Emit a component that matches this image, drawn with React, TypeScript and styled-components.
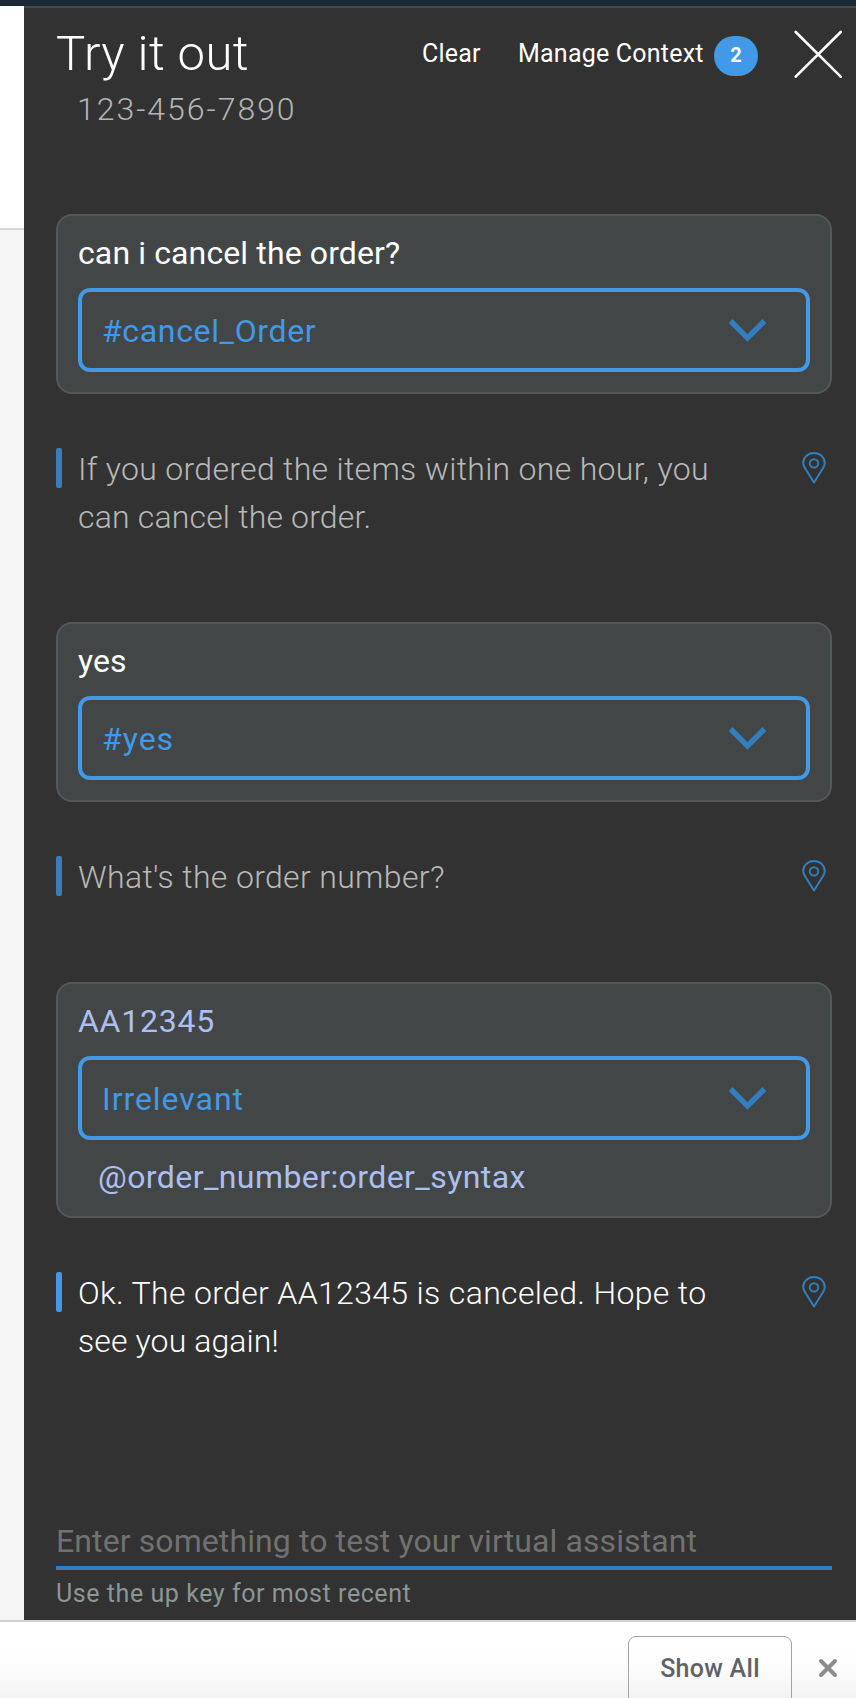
import React from 'react';
import styled, { createGlobalStyle } from 'styled-components';

const GlobalStyle = createGlobalStyle`
  * { box-sizing: border-box; }
  body { margin: 0; background: #fff; font-family: Roboto, "Liberation Sans", sans-serif; font-weight: 400; }
  button { border: 0; padding: 0; background: none; font: inherit; color: inherit; text-align: left; }
`;

const Page = styled.div`
  width: 856px;
  height: 1698px;
  display: flex;
  flex-direction: column;
  overflow: hidden;
`;

const TopBar = styled.div`
  height: 6px;
  flex: none;
  background: #1a2a34;
`;

const Workspace = styled.div`
  flex: none;
  height: 1614px;
  display: flex;
`;

const PageEdge = styled.div`
  width: 24px;
  flex: none;
  display: flex;
  flex-direction: column;
`;

const EdgeHeader = styled.div`
  height: 224px;
  background: #fff;
  border-bottom: 2px solid #d8d8d8;
`;

const EdgeBody = styled.div`
  flex: 1;
  background: #f5f5f5;
`;

const Panel = styled.aside`
  flex: 1;
  display: flex;
  flex-direction: column;
  padding: 0 24px 0 32px;
  background: #323232;
  border-top: 2px solid #464a4a;
`;

const Header = styled.header`
  display: flex;
  padding-top: 17px;
  height: 77px;
  margin-right: -24px;
`;

const Title = styled.h1`
  margin: 0;
  width: 366px;
  font-size: 49px;
  line-height: 57px;
  font-weight: 300;
  letter-spacing: 0.45px;
  color: #fff;
`;

const HeaderAction = styled.button<{ $width: number }>`
  width: ${(p) => p.$width}px;
  flex: none;
  height: 30px;
  margin-top: 14px;
  line-height: 30px;
  font-size: 25px;
  letter-spacing: 0.22px;
  color: #fff;
  white-space: nowrap;
`;

const CountBadge = styled.span`
  width: 44px;
  height: 40px;
  flex: none;
  margin-top: 11px;
  border-radius: 20px;
  background: #4199e8;
  color: #fff;
  font-size: 20px;
  font-weight: 700;
  line-height: 38px;
  text-align: center;
`;

const CloseButton = styled.button`
  width: 48px;
  height: 48px;
  margin: 5px 0 0 36px;
  svg { display: block; }
`;

const Phone = styled.div`
  padding-left: 21px;
  font-size: 32px;
  line-height: 48px;
  font-weight: 300;
  letter-spacing: 1.98px;
  color: #b4b4b4;
`;

const Chat = styled.main`
  flex: 1;
  padding-top: 81px;
`;

const Card = styled.section`
  padding: 13px 20px 20px;
  border: 2px solid #535858;
  border-radius: 16px;
  background: #434647;
`;

const Utterance = styled.div<{ $entity?: boolean; $spacing: number }>`
  font-size: 32px;
  line-height: 48px;
  letter-spacing: ${(p) => p.$spacing}px;
  color: ${(p) => (p.$entity ? '#adbfee' : '#fff')};
`;

const IntentSelect = styled.button<{ $spacing: number }>`
  width: 100%;
  height: 84px;
  margin-top: 11px;
  padding: 2px 38px 0 20px;
  display: flex;
  align-items: center;
  justify-content: space-between;
  border: 4px solid #4199e8;
  border-radius: 12px;
  font-size: 32px;
  line-height: 48px;
  letter-spacing: ${(p) => p.$spacing}px;
  color: #4199e8;
  svg { display: block; margin-top: -3px; }
`;

const Entity = styled.div`
  margin-top: 18px;
  padding-left: 20px;
  font-size: 32px;
  line-height: 38px;
  letter-spacing: 0.42px;
  color: #adbfee;
`;

const Reply = styled.div`
  display: flex;
  margin: 51px 0 81px;
`;

const ReplyMark = styled.span<{ $current?: boolean }>`
  width: 6px;
  height: 40px;
  flex: none;
  margin-top: 3px;
  border-radius: 2px;
  background: ${(p) => (p.$current ? '#4199e8' : '#3f7cb6')};
`;

const ReplyText = styled.p<{ $current?: boolean }>`
  flex: 1;
  margin: 0;
  padding-left: 16px;
  font-size: 32px;
  line-height: 48px;
  font-weight: 300;
  white-space: nowrap;
  color: ${(p) => (p.$current ? '#fff' : '#b8b8b8')};
`;

const Line = styled.span<{ $spacing: number }>`
  display: block;
  letter-spacing: ${(p) => p.$spacing}px;
`;

const PinButton = styled.button`
  width: 24px;
  height: 34px;
  margin: 6px 6px 0 0;
  svg { display: block; }
`;

const Composer = styled.footer`
  height: 103px;
`;

const ComposerInput = styled.input`
  display: block;
  width: 100%;
  height: 53px;
  padding: 0 0 1px;
  border: 0;
  border-bottom: 4px solid #327ebe;
  border-radius: 0;
  outline: 0;
  background: transparent;
  font: 400 32px/48px Roboto, sans-serif;
  letter-spacing: 0.1px;
  &::placeholder { color: #717171; opacity: 1; }
`;

const Hint = styled.div`
  padding: 9px 0 0;
  font-size: 25px;
  line-height: 30px;
  letter-spacing: 0.56px;
  color: #8c9696;
`;

const DownloadBar = styled.div`
  flex: 1;
  display: flex;
  justify-content: flex-end;
  padding: 14px 18px 0 0;
  border-top: 2px solid #d0d0d0;
  background: linear-gradient(#fff 0%, #fefefe 45%, #f1f1f1 100%);
`;

const ShowAll = styled.button`
  width: 164px;
  height: 70px;
  flex: none;
  padding-bottom: 4px;
  border: 1px solid #a3a3a3;
  border-radius: 8px;
  font-size: 25px;
  line-height: 32px;
  font-weight: 500;
  letter-spacing: 0.3px;
  text-align: center;
  color: #5f6368;
`;

const Dismiss = styled.button`
  width: 20px;
  height: 20px;
  margin: 22px 0 0 26px;
  svg { display: block; }
`;

const Chevron = () => (
  <svg width="40" height="24" viewBox="0 0 40 24" fill="none" stroke="#327ebe" strokeWidth="5.4">
    <path d="M2.6 3 19.5 20 36.4 3" />
  </svg>
);

const Pin = () => (
  <svg width="24" height="34" viewBox="0 0 24 34" fill="none" stroke="#327ebe" strokeWidth="2">
    <path strokeLinejoin="round" d="M12 31.5 3.2 17.5C1.8 15.3 1.2 13.8 1.2 12a10.8 10.1 0 0 1 21.6 0c0 1.8-.6 3.3-2 5.5Z" />
    <circle cx="12" cy="12.4" r="4.2" />
  </svg>
);

interface Turn {
  text: string;
  spacing: number;
  intent: string;
  intentSpacing: number;
  entity?: string;
  reply: [string, number][];
  current?: boolean;
}

const turns: Turn[] = [
  {
    text: 'can i cancel the order?', spacing: 0.12,
    intent: '#cancel_Order', intentSpacing: 0.65,
    reply: [
      ['If you ordered the items within one hour, you', 0.3],
      ['can cancel the order.', 0.17],
    ],
  },
  {
    text: 'yes', spacing: 0.05,
    intent: '#yes', intentSpacing: 1,
    reply: [["What's the order number?", 0.34]],
  },
  {
    text: 'AA12345', spacing: 0.74,
    intent: 'Irrelevant', intentSpacing: 0.95,
    entity: '@order_number:order_syntax',
    reply: [
      ['Ok. The order AA12345 is canceled. Hope to', 0.34],
      ['see you again!', 0.1],
    ],
    current: true,
  },
];

export default function App() {
  return (
    <Page>
      <GlobalStyle />
      <TopBar />
      <Workspace>
        <PageEdge>
          <EdgeHeader />
          <EdgeBody />
        </PageEdge>
        <Panel>
          <Header>
            <Title>Try it out</Title>
            <HeaderAction $width={96}>Clear</HeaderAction>
            <HeaderAction $width={196}>Manage Context</HeaderAction>
            <CountBadge>2</CountBadge>
            <CloseButton aria-label="Close">
              <svg width="48" height="48" viewBox="0 0 48 48" stroke="#fff" strokeWidth="2.6" strokeLinecap="round">
                <path d="M1.7 2 46.7 46.7M46.7 2 1.7 46.7" />
              </svg>
            </CloseButton>
          </Header>
          <Phone>123-456-7890</Phone>
          <Chat>
            {turns.map((turn) => (
              <React.Fragment key={turn.text}>
                <Card>
                  <Utterance $entity={Boolean(turn.entity)} $spacing={turn.spacing}>{turn.text}</Utterance>
                  <IntentSelect $spacing={turn.intentSpacing}>
                    {turn.intent}
                    <Chevron />
                  </IntentSelect>
                  {turn.entity && <Entity>{turn.entity}</Entity>}
                </Card>
                <Reply>
                  <ReplyMark $current={turn.current} />
                  <ReplyText $current={turn.current}>
                    {turn.reply.map(([text, spacing]) => (
                      <Line key={text} $spacing={spacing}>{text}</Line>
                    ))}
                  </ReplyText>
                  <PinButton aria-label="Show node">
                    <Pin />
                  </PinButton>
                </Reply>
              </React.Fragment>
            ))}
          </Chat>
          <Composer>
            <ComposerInput placeholder="Enter something to test your virtual assistant" />
            <Hint>Use the up key for most recent</Hint>
          </Composer>
        </Panel>
      </Workspace>
      <DownloadBar>
        <ShowAll>Show All</ShowAll>
        <Dismiss aria-label="Dismiss">
          <svg width="20" height="20" viewBox="0 0 20 20" stroke="#8b8d90" strokeWidth="4" strokeLinecap="round">
            <path d="m3 3 14 14M17 3 3 17" />
          </svg>
        </Dismiss>
      </DownloadBar>
    </Page>
  );
}
